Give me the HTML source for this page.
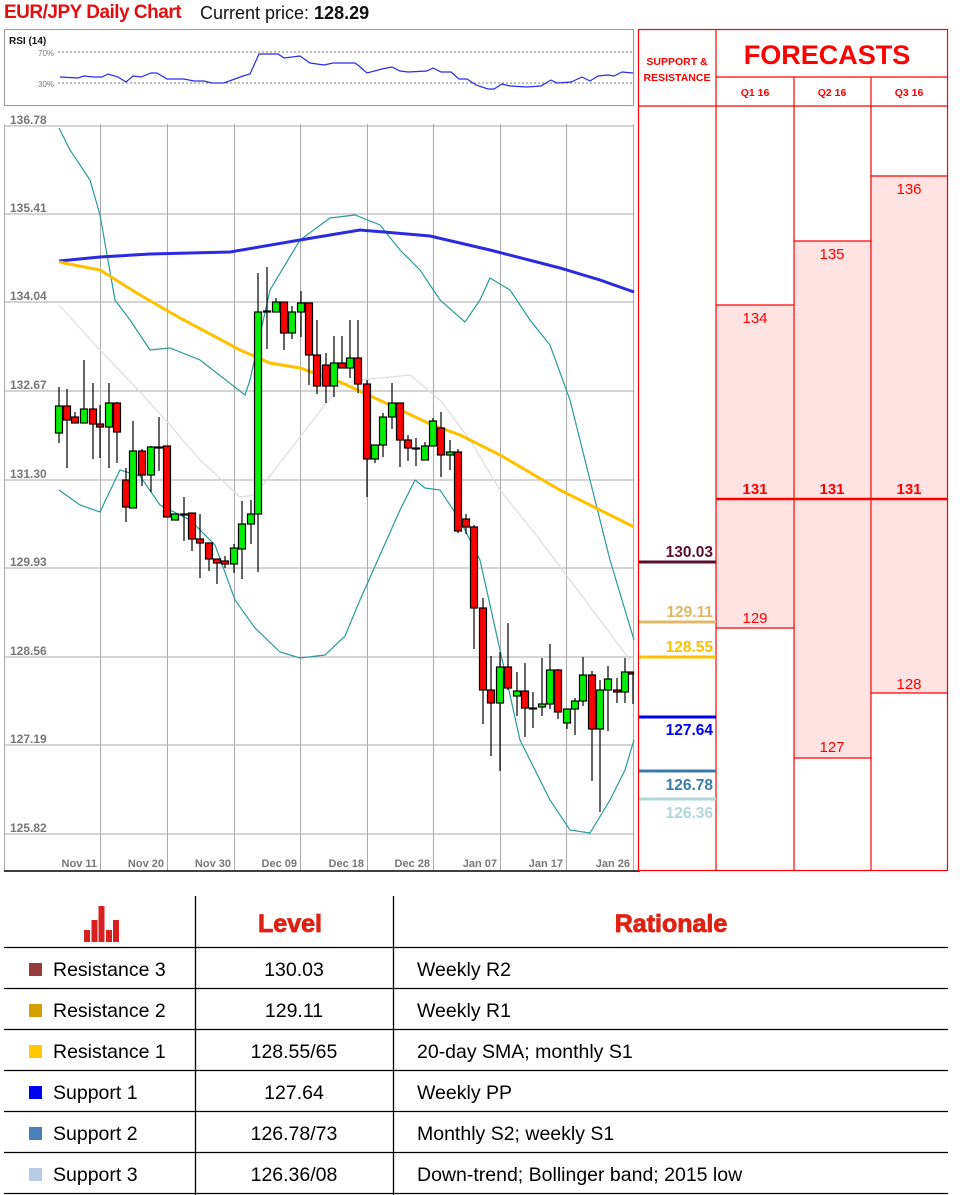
<!DOCTYPE html>
<html><head><meta charset="utf-8"><style>
body{margin:0;width:960px;height:1195px;background:#fff;overflow:hidden;font-family:"Liberation Sans",sans-serif;position:relative}
.t{position:absolute;white-space:nowrap}
</style></head><body>
<div class="t" style="left:4px;top:2px;font-size:19px;color:#e01010;font-weight:bold;letter-spacing:-0.5px">EUR/JPY Daily Chart</div>
<div class="t" style="left:200px;top:3px;font-size:18px;color:#111">Current price: <b>128.29</b></div>

<svg width="960" height="1195" style="position:absolute;left:0;top:0" xmlns="http://www.w3.org/2000/svg" font-family="Liberation Sans, sans-serif">
<rect x="4.5" y="29.5" width="629" height="76" fill="#fff" stroke="#999"/>
<text x="9" y="44" font-size="10" font-weight="bold" fill="#111">RSI (14)</text>
<line x1="58" y1="52" x2="633" y2="52" stroke="#777" stroke-dasharray="2,2"/>
<line x1="58" y1="83" x2="633" y2="83" stroke="#777" stroke-dasharray="2,2"/>
<text x="38" y="56" font-size="8" fill="#777">70%</text>
<text x="38" y="87" font-size="8" fill="#777">30%</text>
<polyline fill="none" stroke="#2a2aee" stroke-width="1.2" points="60,77 78,78 84,76 94,77 102,77 108,74 118,77 126,82 133,76 141,77 151,73 157,73 167,79 184,79 194,81 204,81 212,83 224,83 243,76 250,74 259,54 278,54 284,58 300,56 310,63 324,65 333,63 355,63 359,66 367,73 382,69 392,67 400,71 408,72 427,71 433,68 441,72 451,72 459,79 467,79 476,85 488,89 494,89 502,84 510,86 527,87 541,86 551,80 557,83 571,82 582,77 590,81 598,76 608,75 614,76 622,72 633,73"/>

<rect x="4.5" y="124" width="629" height="747" fill="#fff"/>
<g stroke="#aaa" stroke-width="1">
<line x1="4" y1="126" x2="634" y2="126"/><line x1="4" y1="214" x2="634" y2="214"/><line x1="4" y1="302" x2="634" y2="302"/><line x1="4" y1="391" x2="634" y2="391"/><line x1="4" y1="480" x2="634" y2="480"/><line x1="4" y1="568" x2="634" y2="568"/><line x1="4" y1="657" x2="634" y2="657"/><line x1="4" y1="745" x2="634" y2="745"/><line x1="4" y1="834" x2="634" y2="834"/>
<line x1="4.5" y1="124" x2="4.5" y2="871"/><line x1="100.5" y1="124" x2="100.5" y2="871"/><line x1="167.5" y1="124" x2="167.5" y2="871"/><line x1="234.5" y1="124" x2="234.5" y2="871"/><line x1="300.5" y1="124" x2="300.5" y2="871"/><line x1="367.5" y1="124" x2="367.5" y2="871"/><line x1="433.5" y1="124" x2="433.5" y2="871"/><line x1="500.5" y1="124" x2="500.5" y2="871"/><line x1="566.5" y1="124" x2="566.5" y2="871"/><line x1="633.5" y1="124" x2="633.5" y2="871"/>
</g>
<line x1="4" y1="871" x2="640" y2="871" stroke="#000" stroke-width="1.5"/>
<g font-size="12" font-weight="bold" fill="#777">
<text x="10" y="124">136.78</text><text x="10" y="212">135.41</text><text x="10" y="300">134.04</text><text x="10" y="389">132.67</text><text x="10" y="478">131.30</text><text x="10" y="566">129.93</text><text x="10" y="655">128.56</text><text x="10" y="743">127.19</text><text x="10" y="832">125.82</text>
</g>
<g font-size="11" font-weight="bold" fill="#777" text-anchor="end">
<text x="97" y="867">Nov 11</text><text x="164" y="867">Nov 20</text><text x="231" y="867">Nov 30</text><text x="297" y="867">Dec 09</text><text x="364" y="867">Dec 18</text><text x="430" y="867">Dec 28</text><text x="497" y="867">Jan 07</text><text x="563" y="867">Jan 17</text><text x="630" y="867">Jan 26</text>
</g>

<polyline fill="none" stroke="#ddd" stroke-width="1.2" points="59,305 100,350 140,392 170,425 200,460 240,497 255,495 290,450 340,385 360,380 410,375 440,400 470,440 500,490 540,540 570,580 600,620 630,660"/>
<polyline fill="none" stroke="#2a9a9a" stroke-width="1.2" points="59,128 70,150 90,180 100,215 115,300 130,320 150,350 170,348 200,360 245,395 250,380 270,290 300,240 330,218 355,215 380,225 400,250 420,270 440,300 465,322 480,300 490,278 510,290 530,320 550,345 570,400 590,480 610,560 634,640"/>
<polyline fill="none" stroke="#2a9a9a" stroke-width="1.2" points="59,490 80,505 100,512 120,470 140,476 160,505 190,520 215,545 235,600 255,628 280,652 300,658 325,655 345,636 360,600 380,555 400,510 415,480 425,488 440,490 460,520 480,560 500,650 520,740 550,800 570,830 590,833 610,800 625,770 634,740"/>
<polyline fill="none" stroke="#2a2ae0" stroke-width="3" points="59,261 100,257 150,254 230,252 300,240 360,230 430,236 490,250 560,268 600,280 634,292"/>
<polyline fill="none" stroke="#ffc000" stroke-width="3" points="59,262 100,270 140,295 180,318 240,350 270,363 300,368 340,382 390,405 430,424 460,435 500,455 560,490 600,510 634,527"/>
</svg>

<svg width="960" height="1195" style="position:absolute;left:0;top:0" xmlns="http://www.w3.org/2000/svg" stroke="#000" stroke-width="1.2">
<line x1="59" y1="387" x2="59" y2="443"/><rect x="55.5" y="406" width="7" height="27" fill="#0e0"/>
<line x1="67" y1="389" x2="67" y2="468"/><rect x="63.5" y="406" width="7" height="14" fill="#f00"/>
<line x1="75" y1="412" x2="75" y2="423"/><rect x="71.5" y="417" width="7" height="6" fill="#f00"/>
<line x1="84" y1="360" x2="84" y2="423"/><rect x="80.5" y="409" width="7" height="14" fill="#0e0"/>
<line x1="93" y1="383" x2="93" y2="459"/><rect x="89.5" y="409" width="7" height="15" fill="#f00"/>
<line x1="100" y1="405" x2="100" y2="458"/><rect x="96.5" y="424" width="7" height="3" fill="#f00"/>
<line x1="109" y1="383" x2="109" y2="468"/><rect x="105.5" y="403" width="7" height="24" fill="#0e0"/>
<line x1="117" y1="402" x2="117" y2="463"/><rect x="113.5" y="403" width="7" height="29" fill="#f00"/>
<line x1="126" y1="468" x2="126" y2="522"/><rect x="122.5" y="480" width="7" height="27" fill="#f00"/>
<line x1="133" y1="421" x2="133" y2="508"/><rect x="129.5" y="451" width="7" height="57" fill="#0e0"/>
<line x1="142" y1="449" x2="142" y2="486"/><rect x="138.5" y="451" width="7" height="24" fill="#f00"/>
<line x1="151" y1="446" x2="151" y2="492"/><rect x="147.5" y="447" width="7" height="28" fill="#0e0"/>
<line x1="159" y1="417" x2="159" y2="471"/><rect x="155.5" y="447" width="7" height="1" fill="#000"/>
<line x1="167" y1="446" x2="167" y2="517"/><rect x="163.5" y="446" width="7" height="71" fill="#f00"/>
<line x1="175" y1="514" x2="175" y2="520"/><rect x="171.5" y="514" width="7" height="6" fill="#0e0"/>
<line x1="184" y1="497" x2="184" y2="541"/><rect x="180.5" y="514" width="7" height="1" fill="#000"/>
<line x1="192" y1="513" x2="192" y2="551"/><rect x="188.5" y="513" width="7" height="26" fill="#f00"/>
<line x1="200" y1="514" x2="200" y2="578"/><rect x="196.5" y="539" width="7" height="4" fill="#f00"/>
<line x1="209" y1="543" x2="209" y2="571"/><rect x="205.5" y="543" width="7" height="16" fill="#f00"/>
<line x1="217" y1="559" x2="217" y2="584"/><rect x="213.5" y="559" width="7" height="4" fill="#f00"/>
<line x1="225" y1="556" x2="225" y2="568"/><rect x="221.5" y="561" width="7" height="3" fill="#f00"/>
<line x1="234" y1="544" x2="234" y2="573"/><rect x="230.5" y="548" width="7" height="16" fill="#0e0"/>
<line x1="242" y1="501" x2="242" y2="579"/><rect x="238.5" y="524" width="7" height="25" fill="#0e0"/>
<line x1="251" y1="500" x2="251" y2="544"/><rect x="247.5" y="514" width="7" height="10" fill="#0e0"/>
<line x1="258" y1="273" x2="258" y2="572"/><rect x="254.5" y="312" width="7" height="202" fill="#0e0"/>
<line x1="267" y1="267" x2="267" y2="349"/><rect x="263.5" y="311" width="7" height="1" fill="#000"/>
<line x1="276" y1="298" x2="276" y2="312"/><rect x="272.5" y="302" width="7" height="10" fill="#0e0"/>
<line x1="284" y1="302" x2="284" y2="350"/><rect x="280.5" y="302" width="7" height="31" fill="#f00"/>
<line x1="292" y1="306" x2="292" y2="339"/><rect x="288.5" y="312" width="7" height="21" fill="#0e0"/>
<line x1="301" y1="291" x2="301" y2="337"/><rect x="297.5" y="303" width="7" height="9" fill="#0e0"/>
<line x1="309" y1="303" x2="309" y2="385"/><rect x="305.5" y="303" width="7" height="52" fill="#f00"/>
<line x1="317" y1="320" x2="317" y2="394"/><rect x="313.5" y="355" width="7" height="31" fill="#f00"/>
<line x1="326" y1="353" x2="326" y2="403"/><rect x="322.5" y="365" width="7" height="21" fill="#f00"/>
<line x1="334" y1="336" x2="334" y2="397"/><rect x="330.5" y="363" width="7" height="23" fill="#0e0"/>
<line x1="342" y1="336" x2="342" y2="368"/><rect x="338.5" y="363" width="7" height="5" fill="#f00"/>
<line x1="350" y1="320" x2="350" y2="378"/><rect x="346.5" y="358" width="7" height="10" fill="#0e0"/>
<line x1="358" y1="320" x2="358" y2="393"/><rect x="354.5" y="358" width="7" height="26" fill="#f00"/>
<line x1="367" y1="380" x2="367" y2="497"/><rect x="363.5" y="384" width="7" height="75" fill="#f00"/>
<line x1="375" y1="445" x2="375" y2="463"/><rect x="371.5" y="445" width="7" height="14" fill="#0e0"/>
<line x1="383" y1="413" x2="383" y2="457"/><rect x="379.5" y="417" width="7" height="28" fill="#0e0"/>
<line x1="392" y1="383" x2="392" y2="429"/><rect x="388.5" y="403" width="7" height="14" fill="#0e0"/>
<line x1="400" y1="403" x2="400" y2="467"/><rect x="396.5" y="403" width="7" height="37" fill="#f00"/>
<line x1="408" y1="435" x2="408" y2="461"/><rect x="404.5" y="440" width="7" height="8" fill="#f00"/>
<line x1="416" y1="438" x2="416" y2="466"/><rect x="412.5" y="448" width="7" height="1" fill="#000"/>
<line x1="425" y1="442" x2="425" y2="460"/><rect x="421.5" y="446" width="7" height="14" fill="#0e0"/>
<line x1="433" y1="418" x2="433" y2="446"/><rect x="429.5" y="421" width="7" height="25" fill="#0e0"/>
<line x1="441" y1="412" x2="441" y2="477"/><rect x="437.5" y="428" width="7" height="27" fill="#f00"/>
<line x1="450" y1="440" x2="450" y2="470"/><rect x="446.5" y="452" width="7" height="3" fill="#0e0"/>
<line x1="458" y1="449" x2="458" y2="533"/><rect x="454.5" y="452" width="7" height="79" fill="#f00"/>
<line x1="466" y1="514" x2="466" y2="534"/><rect x="462.5" y="519" width="7" height="8" fill="#f00"/>
<line x1="474" y1="525" x2="474" y2="649"/><rect x="470.5" y="527" width="7" height="81" fill="#f00"/>
<line x1="483" y1="598" x2="483" y2="724"/><rect x="479.5" y="608" width="7" height="82" fill="#f00"/>
<line x1="491" y1="656" x2="491" y2="756"/><rect x="487.5" y="690" width="7" height="13" fill="#f00"/>
<line x1="500" y1="652" x2="500" y2="771"/><rect x="496.5" y="667" width="7" height="36" fill="#0e0"/>
<line x1="508" y1="623" x2="508" y2="690"/><rect x="504.5" y="667" width="7" height="21" fill="#f00"/>
<line x1="517" y1="672" x2="517" y2="716"/><rect x="513.5" y="691" width="7" height="5" fill="#0e0"/>
<line x1="525" y1="663" x2="525" y2="737"/><rect x="521.5" y="691" width="7" height="17" fill="#f00"/>
<line x1="533" y1="692" x2="533" y2="728"/><rect x="529.5" y="708" width="7" height="1" fill="#000"/>
<line x1="542" y1="658" x2="542" y2="716"/><rect x="538.5" y="704" width="7" height="3" fill="#0e0"/>
<line x1="550" y1="644" x2="550" y2="709"/><rect x="546.5" y="670" width="7" height="34" fill="#0e0"/>
<line x1="558" y1="669" x2="558" y2="719"/><rect x="554.5" y="670" width="7" height="42" fill="#f00"/>
<line x1="567" y1="709" x2="567" y2="729"/><rect x="563.5" y="709" width="7" height="14" fill="#0e0"/>
<line x1="575" y1="698" x2="575" y2="735"/><rect x="571.5" y="701" width="7" height="8" fill="#0e0"/>
<line x1="583" y1="657" x2="583" y2="706"/><rect x="579.5" y="675" width="7" height="26" fill="#0e0"/>
<line x1="592" y1="671" x2="592" y2="781"/><rect x="588.5" y="675" width="7" height="54" fill="#f00"/>
<line x1="600" y1="680" x2="600" y2="812"/><rect x="596.5" y="690" width="7" height="39" fill="#0e0"/>
<line x1="608" y1="666" x2="608" y2="731"/><rect x="604.5" y="679" width="7" height="11" fill="#0e0"/>
<line x1="617" y1="678" x2="617" y2="703"/><rect x="613.5" y="690" width="7" height="2" fill="#f00"/>
<line x1="625" y1="658" x2="625" y2="703"/><rect x="621.5" y="672" width="7" height="20" fill="#0e0"/>
<line x1="633" y1="672" x2="633" y2="704"/><rect x="629.5" y="672" width="4" height="2" fill="#f00"/>
</svg>

<svg width="960" height="1195" style="position:absolute;left:0;top:0" xmlns="http://www.w3.org/2000/svg" font-family="Liberation Sans, sans-serif">
<rect x="716" y="305" width="78" height="323" fill="#ffe3e3"/>
<rect x="794" y="241" width="77" height="517" fill="#ffe3e3"/>
<rect x="871" y="176" width="77" height="517" fill="#ffe3e3"/>
<g stroke="#f00" stroke-width="1.2" fill="none">
<rect x="638.5" y="29.5" width="309" height="841"/>
<line x1="716" y1="29" x2="716" y2="871"/>
<line x1="794" y1="77" x2="794" y2="871"/>
<line x1="871" y1="77" x2="871" y2="871"/>
<line x1="716" y1="77" x2="948" y2="77"/>
<line x1="638" y1="106" x2="948" y2="106"/>
<line x1="716" y1="305" x2="794" y2="305"/><line x1="716" y1="628" x2="794" y2="628"/>
<line x1="794" y1="241" x2="871" y2="241"/><line x1="794" y1="758" x2="871" y2="758"/>
<line x1="871" y1="176" x2="948" y2="176"/><line x1="871" y1="693" x2="948" y2="693"/>
</g>
<line x1="716" y1="499" x2="948" y2="499" stroke="#f00" stroke-width="2.5"/>
<g fill="#f00" text-anchor="middle">
<text x="677" y="65" font-size="10.5" font-weight="bold">SUPPORT &amp;</text>
<text x="677" y="81" font-size="10.5" font-weight="bold">RESISTANCE</text>
<text x="827" y="64" font-size="27" font-weight="bold">FORECASTS</text>
<text x="755" y="96" font-size="10.5" font-weight="bold">Q1 16</text>
<text x="832" y="96" font-size="10.5" font-weight="bold">Q2 16</text>
<text x="909" y="96" font-size="10.5" font-weight="bold">Q3 16</text>
<text x="755" y="494" font-size="15" font-weight="bold">131</text>
<text x="832" y="494" font-size="15" font-weight="bold">131</text>
<text x="909" y="494" font-size="15" font-weight="bold">131</text>
<text x="755" y="323" font-size="15">134</text>
<text x="755" y="623" font-size="15">129</text>
<text x="832" y="259" font-size="15">135</text>
<text x="832" y="752" font-size="15">127</text>
<text x="909" y="194" font-size="15">136</text>
<text x="909" y="689" font-size="15">128</text>
</g>
<g font-size="15.5" font-weight="bold" text-anchor="end">
<line x1="639" y1="562" x2="716" y2="562" stroke="#5a0f30" stroke-width="3"/><text x="713" y="557" fill="#5a0f30">130.03</text>
<line x1="639" y1="622" x2="716" y2="622" stroke="#dcb868" stroke-width="3"/><text x="713" y="617" fill="#dcb868">129.11</text>
<line x1="639" y1="657" x2="716" y2="657" stroke="#ffc000" stroke-width="3"/><text x="713" y="652" fill="#ffc000">128.55</text>
<line x1="639" y1="717" x2="716" y2="717" stroke="#0000f0" stroke-width="3"/><text x="713" y="735" fill="#0000f0">127.64</text>
<line x1="639" y1="771" x2="716" y2="771" stroke="#3a7ca8" stroke-width="3"/><text x="713" y="790" fill="#3a7ca8">126.78</text>
<line x1="639" y1="799" x2="716" y2="799" stroke="#b0d8d8" stroke-width="3"/><text x="713" y="818" fill="#b0d8d8">126.36</text>
</g>
</svg>

<svg width="960" height="1195" style="position:absolute;left:0;top:0" xmlns="http://www.w3.org/2000/svg" font-family="Liberation Sans, sans-serif">
<g stroke="#000" stroke-width="1.3">
<line x1="195.5" y1="896" x2="195.5" y2="1195"/><line x1="393.5" y1="896" x2="393.5" y2="1195"/>
<line x1="4" y1="947.5" x2="948" y2="947.5"/><line x1="4" y1="988.5" x2="948" y2="988.5"/><line x1="4" y1="1029.5" x2="948" y2="1029.5"/><line x1="4" y1="1070.5" x2="948" y2="1070.5"/><line x1="4" y1="1111.5" x2="948" y2="1111.5"/><line x1="4" y1="1152.5" x2="948" y2="1152.5"/><line x1="4" y1="1193.5" x2="948" y2="1193.5"/>
</g>
<g fill="#d82020">
<rect x="84" y="930" width="6" height="12"/><rect x="91.5" y="920" width="6" height="22"/><rect x="98.5" y="906" width="6" height="36"/><rect x="106" y="930" width="6" height="12"/><rect x="113" y="920" width="6" height="22"/>
</g>
<g fill="#e02010" font-weight="bold" font-size="25" text-anchor="middle" stroke="#e02010" stroke-width="0.8">
<text x="290" y="932">Level</text>
<text x="671" y="932">Rationale</text>
</g>
<rect x="29" y="963" width="13" height="13" fill="#943c3c"/>
<rect x="29" y="1004" width="13" height="13" fill="#d4a000"/>
<rect x="29" y="1045" width="13" height="13" fill="#ffc800"/>
<rect x="29" y="1086" width="13" height="13" fill="#0000f0"/>
<rect x="29" y="1127" width="13" height="13" fill="#4a80b8"/>
<rect x="29" y="1168" width="13" height="13" fill="#b8cce4"/>
<g font-size="19.5" fill="#000">
<text x="53" y="976">Resistance 3</text><text x="53" y="1017">Resistance 2</text><text x="53" y="1058">Resistance 1</text><text x="53" y="1099">Support 1</text><text x="53" y="1140">Support 2</text><text x="53" y="1181">Support 3</text>
<g text-anchor="middle"><text x="294" y="976">130.03</text><text x="294" y="1017">129.11</text><text x="294" y="1058">128.55/65</text><text x="294" y="1099">127.64</text><text x="294" y="1140">126.78/73</text><text x="294" y="1181">126.36/08</text></g>
<text x="417" y="976">Weekly  R2</text><text x="417" y="1017">Weekly R1</text><text x="417" y="1058">20-day SMA; monthly S1</text><text x="417" y="1099">Weekly PP</text><text x="417" y="1140">Monthly S2; weekly S1</text><text x="417" y="1181">Down-trend; Bollinger band; 2015 low</text>
</g>
</svg>
</body></html>
